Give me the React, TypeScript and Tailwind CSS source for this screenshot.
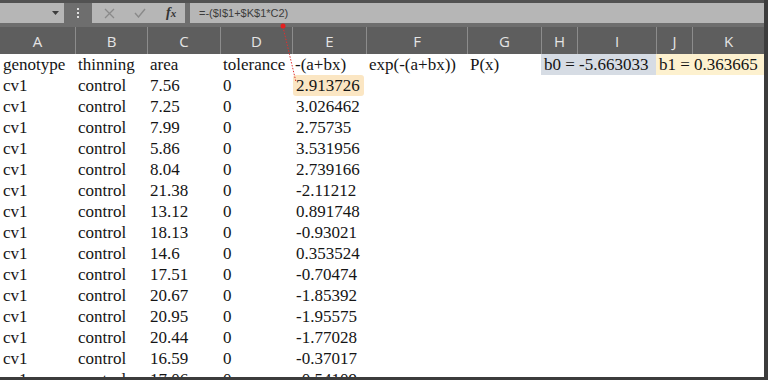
import React from "react";

const cols = ["A", "B", "C", "D", "E", "F", "G", "H", "I", "J", "K"];
const widths = [75, 72, 73, 72, 74, 101, 74, 36, 79, 36, 72];

const rows: [string, string, string, string, string][] = [
  ["cv1", "control", "7.56", "0", "2.913726"],
  ["cv1", "control", "7.25", "0", "3.026462"],
  ["cv1", "control", "7.99", "0", "2.75735"],
  ["cv1", "control", "5.86", "0", "3.531956"],
  ["cv1", "control", "8.04", "0", "2.739166"],
  ["cv1", "control", "21.38", "0", "-2.11212"],
  ["cv1", "control", "13.12", "0", "0.891748"],
  ["cv1", "control", "18.13", "0", "-0.93021"],
  ["cv1", "control", "14.6", "0", "0.353524"],
  ["cv1", "control", "17.51", "0", "-0.70474"],
  ["cv1", "control", "20.67", "0", "-1.85392"],
  ["cv1", "control", "20.95", "0", "-1.95575"],
  ["cv1", "control", "20.44", "0", "-1.77028"],
  ["cv1", "control", "16.59", "0", "-0.37017"],
  ["cv1", "control", "17.06", "0", "-0.54109"],
];

const gridCols =
  "grid grid-cols-[75px_72px_73px_72px_74px_101px_74px_36px_79px_36px_72px]";

function Cell({ children, className = "" }: { children?: React.ReactNode; className?: string }) {
  return <div className={`h-[21px] pl-[3px] whitespace-nowrap ${className}`}>{children}</div>;
}

export default function App() {
  return (
    <div className="relative w-[768px] h-[380px] overflow-hidden bg-white border-r-4 border-b-[3px] border-[#3c3c3c]">
      {/* formula bar */}
      <div className="flex h-[27px] bg-[#6e6e6e] border-t-[3px] border-[#525252] pb-[4px] font-['Liberation_Sans',sans-serif]">
        <div className="w-[64px] bg-[#b6b6b6] flex items-center justify-end pr-[5px]">
          <svg width="7" height="4" viewBox="0 0 7 4">
            <path d="M0 0h7L3.5 4z" fill="#3d3d3d" />
          </svg>
        </div>
        <div className="w-[28px] flex flex-col items-center justify-center gap-[2px]">
          <span className="w-[2px] h-[2px] bg-[#e0e0e0]" />
          <span className="w-[2px] h-[2px] bg-[#e0e0e0]" />
          <span className="w-[2px] h-[2px] bg-[#e0e0e0]" />
        </div>
        <div className="w-[93px] bg-[#b6b6b6] flex items-center">
          <svg className="ml-[12px]" width="11" height="11" viewBox="0 0 11 11">
            <path d="M1 1l9 9M10 1l-9 9" stroke="#8a8a8a" strokeWidth="1.3" />
          </svg>
          <svg className="ml-[19px]" width="12" height="10" viewBox="0 0 12 10">
            <path d="M1 5l3.5 4L11 1" stroke="#8a8a8a" strokeWidth="1.4" fill="none" />
          </svg>
          <span className="ml-[20px] font-['Liberation_Serif',serif] italic font-bold text-[14px] text-[#333] leading-none">
            f<span className="text-[11px]">x</span>
          </span>
        </div>
        <div className="w-[5px]" />
        <div className="flex-1 bg-[#b6b6b6] flex items-center pl-[9px] text-[11px] text-[#3c3c3c]">
          =-($I$1+$K$1*C2)
        </div>
      </div>

      {/* column headers */}
      <div className={`${gridCols} h-[27px] bg-[#5e5e5e] font-['Open_Sans',sans-serif] text-[15px] text-[#e4e4e4]`}>
        {cols.map((c, i) => (
          <div
            key={c}
            className={`flex items-center justify-center pt-[2px] ${i > 0 ? "border-l border-[#8c8c8c]" : ""}`}
          >
            {c}
          </div>
        ))}
      </div>

      {/* sheet */}
      <div className="font-['Liberation_Serif',serif] text-[17px] leading-[21px] text-[#151515]">
        <div className={gridCols}>
          <Cell>genotype</Cell>
          <Cell>thinning</Cell>
          <Cell>area</Cell>
          <Cell>tolerance</Cell>
          <Cell>-(a+bx)</Cell>
          <Cell>exp(-(a+bx))</Cell>
          <Cell>P(x)</Cell>
          <Cell className="col-span-2 bg-[#d6dce4]">b0 = -5.663033</Cell>
          <Cell className="col-span-2 bg-[#fdf1cf]">b1 = 0.363665</Cell>
        </div>
        {rows.map((r, i) => (
          <div key={i} className={gridCols}>
            <Cell>{r[0]}</Cell>
            <Cell>{r[1]}</Cell>
            <Cell>{r[2]}</Cell>
            <Cell>{r[3]}</Cell>
            <div className="h-[21px] pl-[1px]">
              <div
                className={`h-[21px] w-[71px] pl-[3px] rounded-[3px] ${i === 0 ? "bg-[#fbe6c3]" : ""}`}
              >
                {r[4]}
              </div>
            </div>
            <Cell />
          </div>
        ))}
      </div>

      {/* red annotation arrow */}
      <svg className="absolute left-0 top-0 pointer-events-none" width="768" height="380">
        <path d="M283 27 L296 82" stroke="#e03030" strokeWidth="1" strokeDasharray="1.5 1.5" fill="none" />
        <circle cx="283" cy="26" r="2.5" fill="#e42020" />
      </svg>
    </div>
  );
}
